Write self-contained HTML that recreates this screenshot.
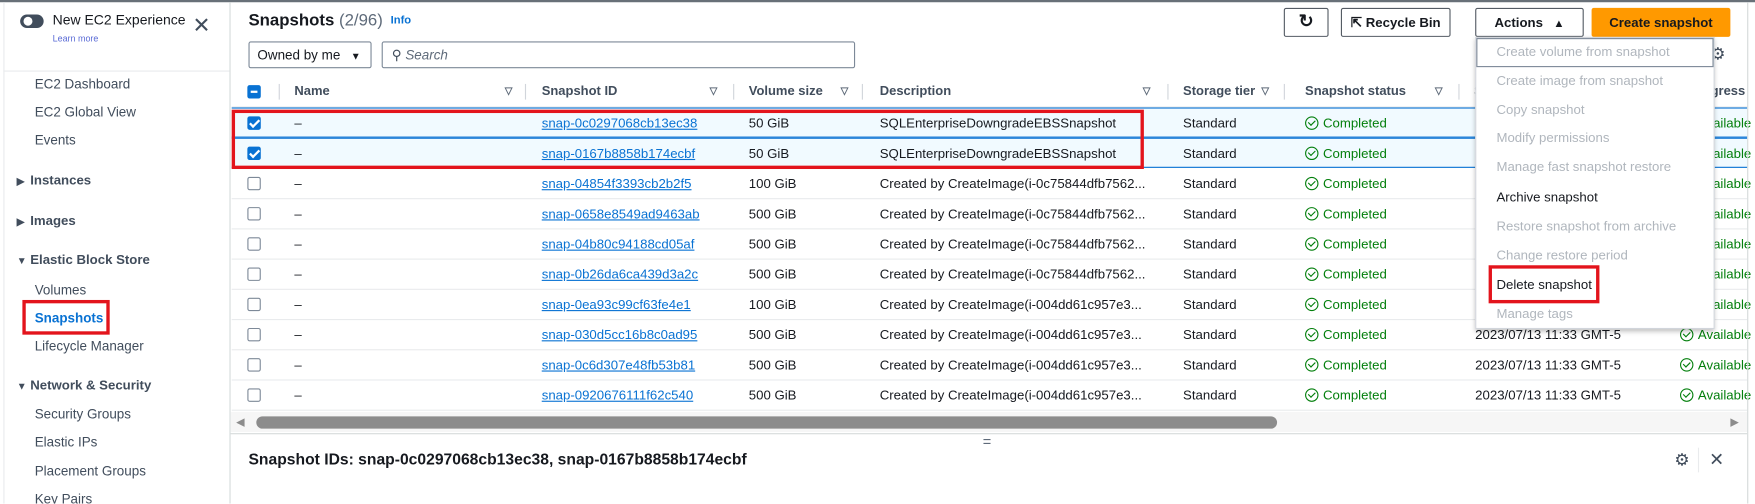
<!DOCTYPE html>
<html><head><meta charset="utf-8"><style>
*{box-sizing:border-box;margin:0;padding:0}
body{width:1755px;height:504px;overflow:hidden;background:#fff;font-family:"Liberation Sans",sans-serif;color:#16191f}
#w{position:absolute;left:0;top:0;width:1568px;height:450px;transform:scale(1.11926);transform-origin:0 0;overflow:hidden;font-size:11.8px}
.a{position:absolute;white-space:nowrap}
.nav{position:absolute;left:31px;font-size:12px;color:#414d5c}
.sec{position:absolute;left:15px;font-size:11.8px;font-weight:bold;color:#414d5c}
.tri{display:inline-block;width:12px;font-size:9px}
.btn{position:absolute;top:7px;height:26px;border:1px solid #545b64;border-radius:2px;background:#fff;font-weight:bold;font-size:11.8px;color:#16191f;text-align:center;line-height:24px}
.row{position:absolute;left:207px;width:1354px;height:27px;border-bottom:1px solid #e9ebed;line-height:26px}
.row .a{top:0}
.cb{position:absolute;left:14px;top:7px;width:12px;height:12px;border:1px solid #7d8998;border-radius:2px;background:#fff}
.sel{background:#f1faff;border-top:1px solid #0972d3;border-bottom:1px solid #0972d3}
.sel .cb{background:#0972d3;border-color:#0972d3}
.sel .cb:after{content:"";position:absolute;left:3px;top:0px;width:3px;height:7px;border:solid #fff;border-width:0 2px 2px 0;transform:rotate(45deg)}
.lnk{color:#0972d3;text-decoration:underline}
.ok{color:#037f0c}
.ck{display:inline-block;width:12px;height:12px;border:1.5px solid #037f0c;border-radius:50%;vertical-align:-2px;margin-right:4px;position:relative}
.ck:after{content:"";position:absolute;left:2.5px;top:1px;width:3px;height:5px;border:solid #037f0c;border-width:0 1.5px 1.5px 0;transform:rotate(45deg)}
.hd{position:absolute;top:68px;left:207px;width:1354px;height:28px;border-bottom:1px solid #e9ebed;font-weight:bold;line-height:27px;font-size:11.6px;color:#414d5c}
.srt{position:absolute;top:0;font-size:9px;color:#5f6b7a}
.dv{position:absolute;top:7px;width:1px;height:14px;background:#d1d5db}
.mi{position:absolute;left:18px;font-size:11.8px;color:#b0b6bd}
</style></head><body><div id="w">
<div class="a" style="left:0;top:0;width:1568px;height:2px;background:#687078"></div>
<div class="a" style="left:3px;top:2px;width:1px;height:448px;background:#e9ebed"></div>
<div class="a" style="left:205px;top:2px;width:1px;height:448px;background:#d5dbdb"></div>
<div class="a" style="left:18px;top:13px;width:21px;height:12px;border-radius:6px;background:#414d5c"></div>
<div class="a" style="left:21px;top:15px;width:8px;height:8px;border-radius:50%;background:#fff"></div>
<div class="a" style="left:47px;top:11px;font-size:12.5px;color:#16191f">New EC2 Experience</div>
<div class="a" style="left:47px;top:30px;font-size:8px;color:#5a6bd6">Learn more</div>
<div class="a" style="left:172px;top:14px;font-size:19px;color:#414d5c;line-height:20px">✕</div>
<div class="a" style="left:3px;top:63px;width:202px;height:1px;background:#e9ebed"></div>
<div class="nav" style="top:68px">EC2 Dashboard</div>
<div class="nav" style="top:93px">EC2 Global View</div>
<div class="nav" style="top:118px">Events</div>
<div class="sec" style="top:154px"><span class="tri">▶</span>Instances</div>
<div class="sec" style="top:190px"><span class="tri">▶</span>Images</div>
<div class="sec" style="top:225px"><span class="tri">▼</span>Elastic Block Store</div>
<div class="nav" style="top:252px">Volumes</div>
<div class="nav" style="top:277px;color:#0972d3;font-weight:bold">Snapshots</div>
<div class="a" style="left:20px;top:268px;width:78px;height:31px;border:3px solid #e3141c"></div>
<div class="nav" style="top:302px">Lifecycle Manager</div>
<div class="sec" style="top:337px"><span class="tri">▼</span>Network &amp; Security</div>
<div class="nav" style="top:363px">Security Groups</div>
<div class="nav" style="top:388px">Elastic IPs</div>
<div class="nav" style="top:414px">Placement Groups</div>
<div class="nav" style="top:439px">Key Pairs</div>
<div class="a" style="left:222px;top:10px;font-size:15px;font-weight:bold">Snapshots <span style="font-weight:normal;color:#5f6b7a">(2/96)</span></div>
<div class="a" style="left:349px;top:13px;font-size:10px;font-weight:bold;color:#0972d3">Info</div>
<div class="btn" style="left:1147px;width:40px;font-size:16px">↻</div>
<div class="btn" style="left:1198px;width:98px"><span style="font-size:12px">⇱</span> Recycle Bin</div>
<div class="btn" style="left:1318px;width:97px">Actions <span style="font-size:10px;margin-left:6px">▲</span></div>
<div class="btn" style="left:1422px;width:124px;background:#ff9900;border-color:#ff9900">Create snapshot</div>
<div class="a" style="left:222px;top:37px;width:110px;height:24px;border:1px solid #7d8998;border-radius:2px;line-height:22px;padding-left:7px;font-size:12px">Owned by me <span style="font-size:9px;margin-left:6px">▼</span></div>
<div class="a" style="left:341px;top:37px;width:423px;height:24px;border:1px solid #7d8998;border-radius:2px;line-height:22px;padding-left:8px;font-size:12px;color:#5f6b7a"><span style="color:#414d5c">&#9906;</span> <i>Search</i></div>
<div class="a" style="left:1528px;top:39px;font-size:15px;color:#414d5c">⚙</div>
<div class="hd">
<div class="cb" style="top:8px;background:#0972d3;border-color:#0972d3"><div style="position:absolute;left:2px;top:4px;width:6px;height:2px;background:#fff"></div></div>
<div class="dv" style="left:42px"></div>
<div class="a" style="left:56px">Name</div><div class="srt" style="left:244px">▽</div><div class="dv" style="left:262px"></div>
<div class="a" style="left:277px">Snapshot ID</div><div class="srt" style="left:427px">▽</div><div class="dv" style="left:448px"></div>
<div class="a" style="left:462px">Volume size</div><div class="srt" style="left:544px">▽</div><div class="dv" style="left:563px"></div>
<div class="a" style="left:579px">Description</div><div class="srt" style="left:814px">▽</div><div class="dv" style="left:836px"></div>
<div class="a" style="left:850px">Storage tier</div><div class="srt" style="left:920px">▽</div><div class="dv" style="left:940px"></div>
<div class="a" style="left:959px">Snapshot status</div><div class="srt" style="left:1075px">▽</div><div class="dv" style="left:1096px"></div>
<div class="a" style="left:1110px">Started</div>
<div class="a" style="left:1302px">Progress</div>
</div>
<div class="row sel" style="top:96px"><div class="cb"></div><div class="a" style="left:56px">–</div><div class="a lnk" style="left:277px">snap-0c0297068cb13ec38</div><div class="a" style="left:462px">50 GiB</div><div class="a" style="left:579px">SQLEnterpriseDowngradeEBSSnapshot</div><div class="a" style="left:850px">Standard</div><div class="a ok" style="left:959px"><span class="ck"></span>Completed</div><div class="a" style="left:1111px">2023/07/13 11:33 GMT-5</div><div class="a ok" style="left:1294px"><span class="ck"></span>Available</div></div>
<div class="row sel" style="top:123px"><div class="cb"></div><div class="a" style="left:56px">–</div><div class="a lnk" style="left:277px">snap-0167b8858b174ecbf</div><div class="a" style="left:462px">50 GiB</div><div class="a" style="left:579px">SQLEnterpriseDowngradeEBSSnapshot</div><div class="a" style="left:850px">Standard</div><div class="a ok" style="left:959px"><span class="ck"></span>Completed</div><div class="a" style="left:1111px">2023/07/13 11:33 GMT-5</div><div class="a ok" style="left:1294px"><span class="ck"></span>Available</div></div>
<div class="row" style="top:151px"><div class="cb"></div><div class="a" style="left:56px">–</div><div class="a lnk" style="left:277px">snap-04854f3393cb2b2f5</div><div class="a" style="left:462px">100 GiB</div><div class="a" style="left:579px">Created by CreateImage(i-0c75844dfb7562...</div><div class="a" style="left:850px">Standard</div><div class="a ok" style="left:959px"><span class="ck"></span>Completed</div><div class="a" style="left:1111px">2023/07/13 11:33 GMT-5</div><div class="a ok" style="left:1294px"><span class="ck"></span>Available</div></div>
<div class="row" style="top:178px"><div class="cb"></div><div class="a" style="left:56px">–</div><div class="a lnk" style="left:277px">snap-0658e8549ad9463ab</div><div class="a" style="left:462px">500 GiB</div><div class="a" style="left:579px">Created by CreateImage(i-0c75844dfb7562...</div><div class="a" style="left:850px">Standard</div><div class="a ok" style="left:959px"><span class="ck"></span>Completed</div><div class="a" style="left:1111px">2023/07/13 11:33 GMT-5</div><div class="a ok" style="left:1294px"><span class="ck"></span>Available</div></div>
<div class="row" style="top:205px"><div class="cb"></div><div class="a" style="left:56px">–</div><div class="a lnk" style="left:277px">snap-04b80c94188cd05af</div><div class="a" style="left:462px">500 GiB</div><div class="a" style="left:579px">Created by CreateImage(i-0c75844dfb7562...</div><div class="a" style="left:850px">Standard</div><div class="a ok" style="left:959px"><span class="ck"></span>Completed</div><div class="a" style="left:1111px">2023/07/13 11:33 GMT-5</div><div class="a ok" style="left:1294px"><span class="ck"></span>Available</div></div>
<div class="row" style="top:232px"><div class="cb"></div><div class="a" style="left:56px">–</div><div class="a lnk" style="left:277px">snap-0b26da6ca439d3a2c</div><div class="a" style="left:462px">500 GiB</div><div class="a" style="left:579px">Created by CreateImage(i-0c75844dfb7562...</div><div class="a" style="left:850px">Standard</div><div class="a ok" style="left:959px"><span class="ck"></span>Completed</div><div class="a" style="left:1111px">2023/07/13 11:33 GMT-5</div><div class="a ok" style="left:1294px"><span class="ck"></span>Available</div></div>
<div class="row" style="top:259px"><div class="cb"></div><div class="a" style="left:56px">–</div><div class="a lnk" style="left:277px">snap-0ea93c99cf63fe4e1</div><div class="a" style="left:462px">100 GiB</div><div class="a" style="left:579px">Created by CreateImage(i-004dd61c957e3...</div><div class="a" style="left:850px">Standard</div><div class="a ok" style="left:959px"><span class="ck"></span>Completed</div><div class="a" style="left:1111px">2023/07/13 11:33 GMT-5</div><div class="a ok" style="left:1294px"><span class="ck"></span>Available</div></div>
<div class="row" style="top:286px"><div class="cb"></div><div class="a" style="left:56px">–</div><div class="a lnk" style="left:277px">snap-030d5cc16b8c0ad95</div><div class="a" style="left:462px">500 GiB</div><div class="a" style="left:579px">Created by CreateImage(i-004dd61c957e3...</div><div class="a" style="left:850px">Standard</div><div class="a ok" style="left:959px"><span class="ck"></span>Completed</div><div class="a" style="left:1111px">2023/07/13 11:33 GMT-5</div><div class="a ok" style="left:1294px"><span class="ck"></span>Available</div></div>
<div class="row" style="top:313px"><div class="cb"></div><div class="a" style="left:56px">–</div><div class="a lnk" style="left:277px">snap-0c6d307e48fb53b81</div><div class="a" style="left:462px">500 GiB</div><div class="a" style="left:579px">Created by CreateImage(i-004dd61c957e3...</div><div class="a" style="left:850px">Standard</div><div class="a ok" style="left:959px"><span class="ck"></span>Completed</div><div class="a" style="left:1111px">2023/07/13 11:33 GMT-5</div><div class="a ok" style="left:1294px"><span class="ck"></span>Available</div></div>
<div class="row" style="top:340px"><div class="cb"></div><div class="a" style="left:56px">–</div><div class="a lnk" style="left:277px">snap-0920676111f62c540</div><div class="a" style="left:462px">500 GiB</div><div class="a" style="left:579px">Created by CreateImage(i-004dd61c957e3...</div><div class="a" style="left:850px">Standard</div><div class="a ok" style="left:959px"><span class="ck"></span>Completed</div><div class="a" style="left:1111px">2023/07/13 11:33 GMT-5</div><div class="a ok" style="left:1294px"><span class="ck"></span>Available</div></div>
<div class="a" style="left:207px;top:98px;width:815px;height:53px;border:3px solid #e3141c"></div>
<div class="a" style="left:206px;top:368px;width:1355px;height:18px;background:#f6f6f6"></div>
<div class="a" style="left:211px;top:372px;font-size:10px;color:#8c8c8c">◀</div>
<div class="a" style="left:229px;top:372px;width:912px;height:11px;border-radius:6px;background:#8c8c8c"></div>
<div class="a" style="left:1546px;top:372px;font-size:10px;color:#8c8c8c">▶</div>
<div class="a" style="left:206px;top:387px;width:1355px;height:1px;background:#d5dbdb"></div>
<div class="a" style="left:1561px;top:2px;width:1px;height:448px;background:#d5dbdb"></div>
<div class="a" style="left:878px;top:387px;font-size:13px;color:#5f6b7a">=</div>
<div class="a" style="left:222px;top:402px;font-size:14px;font-weight:bold">Snapshot IDs: snap-0c0297068cb13ec38, snap-0167b8858b174ecbf</div>
<div class="a" style="left:1496px;top:402px;font-size:15px;color:#414d5c">⚙</div>
<div class="a" style="left:1517px;top:400px;width:1px;height:22px;background:#e9ebed"></div>
<div class="a" style="left:1527px;top:401px;font-size:16px;color:#414d5c">✕</div>
<div class="a" style="left:1318px;top:33px;width:214px;height:261px;background:#fff;border:1px solid #d1d5db;box-shadow:0 2px 4px rgba(0,0,0,.25);line-height:18px">
<div class="a" style="left:0;top:0;width:212px;height:26px;border:1px solid #7d8998"></div>
<div class="mi" style="top:3px">Create volume from snapshot</div>
<div class="mi" style="top:29px">Create image from snapshot</div>
<div class="mi" style="top:55px">Copy snapshot</div>
<div class="mi" style="top:80px">Modify permissions</div>
<div class="mi" style="top:106px">Manage fast snapshot restore</div>
<div class="mi" style="top:133px;color:#16191f">Archive snapshot</div>
<div class="mi" style="top:159px">Restore snapshot from archive</div>
<div class="mi" style="top:185px">Change restore period</div>
<div class="mi" style="top:211px;color:#16191f">Delete snapshot</div>
<div class="mi" style="top:237px">Manage tags</div>
<div class="a" style="left:11px;top:203px;width:99px;height:34px;border:3px solid #e3141c"></div>
</div>
</div></body></html>
